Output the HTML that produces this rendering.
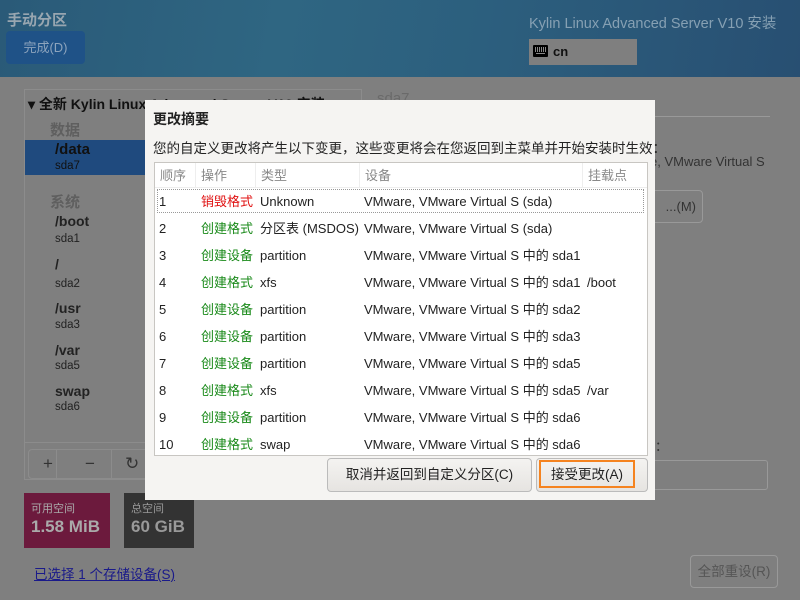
<!DOCTYPE html>
<html><head><meta charset="utf-8"><style>
*{margin:0;padding:0;box-sizing:border-box}
body{width:800px;height:600px;overflow:hidden;background:#7f7f7f;font-family:"Liberation Sans","Noto Sans CJK SC",sans-serif;position:relative;font-size:13px;color:#222}
.a{position:absolute;white-space:nowrap}
#hdr{left:0;top:0;width:800px;height:77px;background:linear-gradient(100deg,#2a5a78 0%,#2f6682 35%,#2c5f7e 60%,#284f72 100%)}
#dlg{left:145px;top:100px;width:510px;height:400px;background:#f5f4f2}
#tbl{left:9px;top:62px;width:494px;height:294px;background:#fff;border:1px solid #c8c6c2;overflow:hidden}
.row{position:absolute;left:0;width:494px;height:27px;line-height:27px;font-size:13px;color:#222}
.row span{position:absolute}
.gr{color:#1a8a1a}.rd{color:#e01010}
.btn{position:absolute;border:1px solid #bbb;border-radius:4px;background:linear-gradient(#f4f3f1,#e6e4e1);text-align:center;font-size:13.5px;color:#222}
</style></head><body>
<div class="a" id="hdr"></div>
<div class="a" style="left:7px;top:9px;font-size:15px;font-weight:bold;color:#98a6b0">手动分区</div>
<div class="a" style="left:6px;top:31px;width:79px;height:33px;background:#1f5287;border-radius:4px;color:#8da4bd;font-size:13px;line-height:33px;text-align:center">完成(D)</div>
<div class="a" style="left:529px;top:12px;font-size:14.5px;color:#86a0b3">Kylin Linux Advanced Server V10 安装</div>
<div class="a" style="left:529px;top:39px;width:108px;height:26px;background:#7f7f7f"></div>
<div class="a" style="left:533px;top:45px;width:15px;height:12px;background:#000;border-radius:1px"><div style="position:absolute;left:2px;top:2px;width:11px;height:5px;background:repeating-linear-gradient(90deg,#888 0 1px,#000 1px 2px)"></div><div style="position:absolute;left:3px;top:8px;width:9px;height:1px;background:#888"></div></div>
<div class="a" style="left:553px;top:44px;font-weight:bold;font-size:13px;color:#111">cn</div>

<div class="a" style="left:24px;top:89px;width:338px;height:391px;border:1px solid #8c8c8c"></div>
<div class="a" style="left:28px;top:94px;font-size:14px;font-weight:bold;color:#111">▾ 全新 Kylin Linux Advanced Server V10 安装</div>
<div class="a" style="left:50px;top:119px;font-size:15px;color:#5f5f5f;font-weight:bold">数据</div>
<div class="a" style="left:25px;top:140px;width:121px;height:35px;background:#1f4a7e"></div>
<div class="a" style="left:55px;top:141px;font-size:15px;font-weight:bold;color:#111">/data</div>
<div class="a" style="left:55px;top:160px;font-size:11.5px;color:#111">sda7</div>
<div class="a" style="left:50px;top:191px;font-size:15px;color:#5f5f5f;font-weight:bold">系统</div>
<div class="a" style="left:55px;top:213px;font-size:14px;font-weight:bold;color:#222">/boot</div><div class="a" style="left:55px;top:233px;font-size:11.5px;color:#222">sda1</div>
<div class="a" style="left:55px;top:256px;font-size:14px;font-weight:bold;color:#222">/</div><div class="a" style="left:55px;top:278px;font-size:11.5px;color:#222">sda2</div>
<div class="a" style="left:55px;top:300px;font-size:14px;font-weight:bold;color:#222">/usr</div><div class="a" style="left:55px;top:319px;font-size:11.5px;color:#222">sda3</div>
<div class="a" style="left:55px;top:342px;font-size:14px;font-weight:bold;color:#222">/var</div><div class="a" style="left:55px;top:360px;font-size:11.5px;color:#222">sda5</div>
<div class="a" style="left:55px;top:383px;font-size:14px;font-weight:bold;color:#222">swap</div><div class="a" style="left:55px;top:401px;font-size:11.5px;color:#222">sda6</div>
<div class="a" style="left:24px;top:442px;width:338px;height:1px;background:#8c8c8c"></div>
<div class="a" style="left:28px;top:449px;width:130px;height:30px;border:1px solid #8c8c8c;border-radius:4px;font-size:17px;color:#333;line-height:28px"><span style="position:absolute;left:14px">+</span><span style="position:absolute;left:27px;top:0;height:28px;border-left:1px solid #8c8c8c"></span><span style="position:absolute;left:56px">−</span><span style="position:absolute;left:82px;top:0;height:28px;border-left:1px solid #8c8c8c"></span><span style="position:absolute;left:96px">↻</span></div>

<div class="a" style="left:377px;top:90px;font-size:15px;color:#6a6a6a">sda7</div>
<div class="a" style="left:368px;top:116px;width:402px;height:1px;background:#999"></div>
<div class="a" style="left:650px;top:154px;font-size:13px;color:#333">e, VMware Virtual S</div>
<div class="a" style="left:640px;top:190px;width:63px;height:33px;border:1px solid #999;border-radius:4px;font-size:13px;color:#333;line-height:31px;text-align:right;padding-right:6px">...(M)</div>
<div class="a" style="left:655px;top:436px;font-size:13px;color:#333">：</div>
<div class="a" style="left:640px;top:460px;width:128px;height:30px;border:1px solid #999;border-radius:3px"></div>

<div class="a" style="left:24px;top:493px;width:86px;height:55px;background:#6c1a3d"></div>
<div class="a" style="left:31px;top:500px;font-size:11px;color:#aaa">可用空间</div>
<div class="a" style="left:31px;top:517px;font-size:17px;font-weight:bold;color:#aaa">1.58 MiB</div>
<div class="a" style="left:124px;top:493px;width:70px;height:55px;background:#333"></div>
<div class="a" style="left:131px;top:500px;font-size:11px;color:#999">总空间</div>
<div class="a" style="left:131px;top:517px;font-size:17px;font-weight:bold;color:#999">60 GiB</div>
<div class="a" style="left:34px;top:563px;font-size:13.5px;color:#1a1a8a;text-decoration:underline">已选择 1 个存储设备(S)</div>
<div class="a" style="left:690px;top:555px;width:88px;height:33px;border:1px solid #999;border-radius:4px;font-size:13.5px;color:#555;text-align:center;line-height:31px">全部重设(R)</div>

<div class="a" id="dlg">
<div class="a" style="left:8px;top:9px;font-size:14px;font-weight:bold;color:#222">更改摘要</div>
<div class="a" style="left:8px;top:37px;font-size:13.5px;color:#222">您的自定义更改将产生以下变更，这些变更将会在您返回到主菜单并开始安装时生效：</div>
<div class="a" id="tbl">
<div class="row" style="top:0;height:25px;line-height:25px;color:#888;border-bottom:1px solid #eee"><span style="left:5px">顺序</span><span style="left:40px;top:0;height:25px;border-left:1px solid #eee"></span><span style="left:46px">操作</span><span style="left:100px;top:0;height:25px;border-left:1px solid #eee"></span><span style="left:106px">类型</span><span style="left:204px;top:0;height:25px;border-left:1px solid #eee"></span><span style="left:210px">设备</span><span style="left:427px;top:0;height:25px;border-left:1px solid #eee"></span><span style="left:433px">挂载点</span></div>
<div class="row" style="top:26px;left:2px;width:487px;height:24px;line-height:22px;border:1px dotted #999"></div>
<div class="row" style="top:25px"><span style="left:4px">1</span><span class="rd" style="left:46px">销毁格式</span><span style="left:105px">Unknown</span><span style="left:209px">VMware, VMware Virtual S (sda)</span></div>
<div class="row" style="top:52px"><span style="left:4px">2</span><span class="gr" style="left:46px">创建格式</span><span style="left:105px">分区表 (MSDOS)</span><span style="left:209px">VMware, VMware Virtual S (sda)</span></div>
<div class="row" style="top:79px"><span style="left:4px">3</span><span class="gr" style="left:46px">创建设备</span><span style="left:105px">partition</span><span style="left:209px">VMware, VMware Virtual S 中的 sda1</span></div>
<div class="row" style="top:106px"><span style="left:4px">4</span><span class="gr" style="left:46px">创建格式</span><span style="left:105px">xfs</span><span style="left:209px">VMware, VMware Virtual S 中的 sda1</span><span style="left:432px">/boot</span></div>
<div class="row" style="top:133px"><span style="left:4px">5</span><span class="gr" style="left:46px">创建设备</span><span style="left:105px">partition</span><span style="left:209px">VMware, VMware Virtual S 中的 sda2</span></div>
<div class="row" style="top:160px"><span style="left:4px">6</span><span class="gr" style="left:46px">创建设备</span><span style="left:105px">partition</span><span style="left:209px">VMware, VMware Virtual S 中的 sda3</span></div>
<div class="row" style="top:187px"><span style="left:4px">7</span><span class="gr" style="left:46px">创建设备</span><span style="left:105px">partition</span><span style="left:209px">VMware, VMware Virtual S 中的 sda5</span></div>
<div class="row" style="top:214px"><span style="left:4px">8</span><span class="gr" style="left:46px">创建格式</span><span style="left:105px">xfs</span><span style="left:209px">VMware, VMware Virtual S 中的 sda5</span><span style="left:432px">/var</span></div>
<div class="row" style="top:241px"><span style="left:4px">9</span><span class="gr" style="left:46px">创建设备</span><span style="left:105px">partition</span><span style="left:209px">VMware, VMware Virtual S 中的 sda6</span></div>
<div class="row" style="top:268px"><span style="left:4px">10</span><span class="gr" style="left:46px">创建格式</span><span style="left:105px">swap</span><span style="left:209px">VMware, VMware Virtual S 中的 sda6</span></div>
</div>
<div class="btn" style="left:182px;top:358px;width:205px;height:34px;line-height:32px">取消并返回到自定义分区(C)</div>
<div class="btn" style="left:391px;top:358px;width:112px;height:34px"></div>
<div class="a" style="left:394px;top:360px;width:96px;height:28px;border:2px solid #f5831f;font-size:13.5px;line-height:26px;text-align:center;color:#222">接受更改(A)</div>
</div>
</body></html>
